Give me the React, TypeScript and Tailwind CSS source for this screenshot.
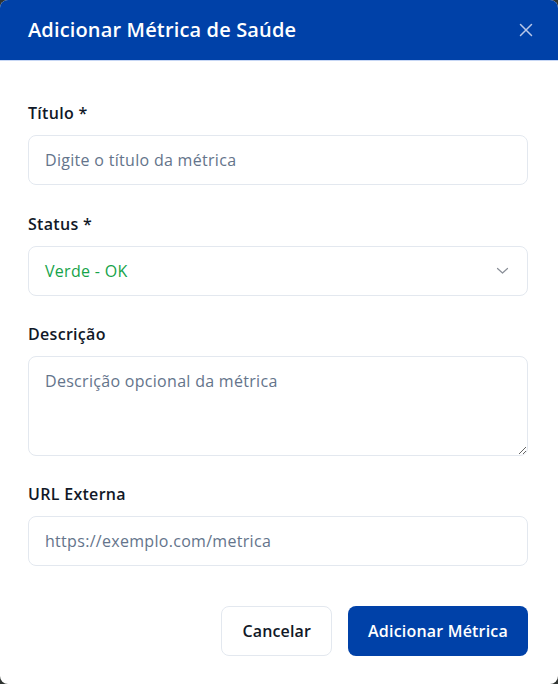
import React from "react";

export default function App() {
  return (
    <div className="w-[558px] h-[684px] bg-[#2f3431] tracking-[0.3px]" style={{ fontFamily: '"Open Sans", "Noto Sans", sans-serif' }}>
      <div className="h-full w-full rounded-lg overflow-hidden bg-white flex flex-col">
        <div className="h-[61px] shrink-0 bg-[#0041a8] border-b border-[#c7d7f5] pl-7 pr-[22px] flex items-center justify-between">
          <h2 className="text-[20px] font-semibold text-white tracking-[0.15px]">Adicionar Métrica de Saúde</h2>
          <button className="w-[20px] h-[20px] flex items-center justify-center text-[#b8c7e8]">
            <svg width="14" height="14" viewBox="0 0 14 14" fill="none" stroke="currentColor" strokeWidth="1.5" strokeLinecap="round">
              <path d="M1.5 1.5L12.5 12.5M12.5 1.5L1.5 12.5" />
            </svg>
          </button>
        </div>
        <form className="pl-7 pr-[30px] pt-[40px] flex flex-col" onSubmit={(e) => e.preventDefault()}>
          <div className="flex flex-col">
            <label className="text-[16px] leading-6 font-semibold text-[#111827] mb-[10px]">Título *</label>
            <input
              className="h-[50px] w-full rounded-lg border border-[#e3e8ef] px-4 text-[16px] tracking-[0.3px] text-[#111827] placeholder:text-[#64748b] outline-none"
              placeholder="Digite o título da métrica"
            />
          </div>
          <div className="flex flex-col mt-[27px]">
            <label className="text-[16px] leading-6 font-semibold text-[#111827] mb-[10px]">Status *</label>
            <div className="h-[50px] w-full rounded-lg border border-[#e3e8ef] px-4 flex items-center justify-between">
              <span className="text-[16px] text-[#16a34a]">Verde - OK</span>
              <svg width="13" height="8" viewBox="0 0 13 8" fill="none" stroke="#8a8f98" strokeWidth="1.2" strokeLinecap="round" strokeLinejoin="round" className="mr-[2px]">
                <path d="M1.5 1.5L6.5 6L11.5 1.5" />
              </svg>
            </div>
          </div>
          <div className="flex flex-col mt-[26px]">
            <label className="text-[16px] leading-6 font-semibold text-[#111827] mb-[10px]">Descrição</label>
            <textarea
              className="h-[100px] w-full rounded-lg border border-[#e3e8ef] px-4 py-3 text-[16px] leading-6 tracking-[0.3px] text-[#111827] placeholder:text-[#64748b] outline-none"
              placeholder="Descrição opcional da métrica"
            />
          </div>
          <div className="flex flex-col mt-[26px]">
            <label className="text-[16px] leading-6 font-semibold text-[#111827] mb-[10px]">URL Externa</label>
            <input
              className="h-[50px] w-full rounded-lg border border-[#e3e8ef] px-4 text-[16px] tracking-[0.3px] text-[#111827] placeholder:text-[#64748b] outline-none"
              placeholder="https://exemplo.com/metrica"
            />
          </div>
          <div className="flex justify-end gap-4 mt-[40px]">
            <button type="button" className="h-[50px] px-5 rounded-lg border border-[#e3e8ef] bg-white text-[16px] font-semibold tracking-[0.15px] text-[#111827]">
              Cancelar
            </button>
            <button type="submit" className="h-[50px] px-5 rounded-lg bg-[#0041a8] text-[16px] font-semibold tracking-[0.2px] text-white">
              Adicionar Métrica
            </button>
          </div>
        </form>
      </div>
    </div>
  );
}
